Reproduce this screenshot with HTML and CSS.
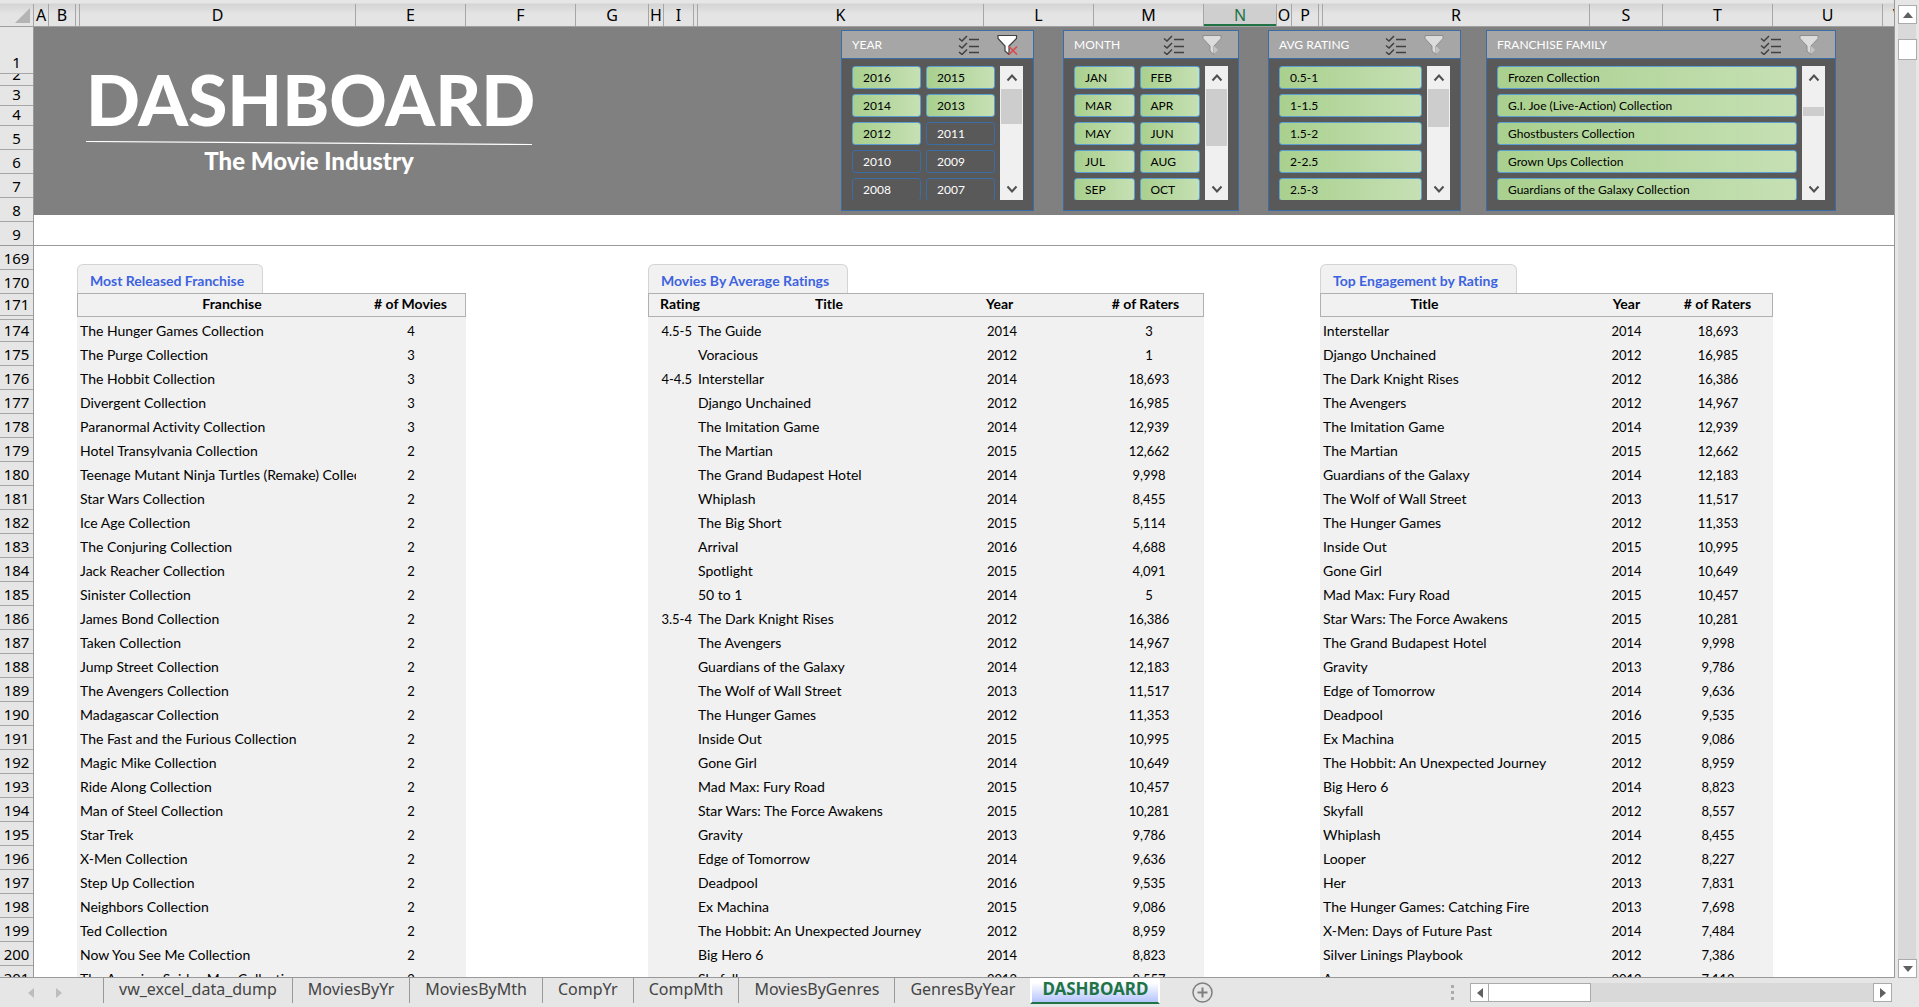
FILE: index.html
```html
<!DOCTYPE html>
<html lang="en">
<head>
<meta charset="utf-8">
<title>Movie Industry Dashboard</title>
<link rel="stylesheet" href="styles.css">
</head>
<body>
<svg class="defs" aria-hidden="true">
  <symbol id="multi" viewBox="0 0 22 20">
    <path d="M1 3.5l3 2.5 5-5M1 10.5l3 2.5 5-5M1 17l3 2.5 5-5" fill="none" stroke="#404040" stroke-width="1.5"/>
    <path d="M11 4.500h10M11 11.500h10M11 17.500h10" stroke="#404040" stroke-width="1.500"/>
  </symbol>
  <symbol id="funnel" viewBox="0 0 22 20">
    <path d="M1 .5h18v3l-7 7.500v8.500l-4-3.500v-5l-7-7.500z" fill="#dcdcdc" stroke="#8c8c8c"/>
    <path d="M12 11v8l4-4z" fill="#c4c4c4"/>
  </symbol>
  <symbol id="funnel-on" viewBox="0 0 22 20">
    <path d="M1 .5h18.500v3l-7.500 7.500v8.500l-4-3.500v-5l-7-7.500z" fill="#fff" stroke="#404040" stroke-width="1.200"/>
    <path d="M12 11.500l8 8M20 11.500l-8 8" stroke="#e04848" stroke-width="1.600"/>
  </symbol>
  <symbol id="up" viewBox="0 0 12 12"><path d="M1.500 8.500l4.500-5 4.500 5" fill="none" stroke="#505050" stroke-width="2"/></symbol>
  <symbol id="down" viewBox="0 0 12 12"><path d="M1.500 3.500l4.500 5 4.500-5" fill="none" stroke="#505050" stroke-width="2"/></symbol>
</svg>
<div class="app">
  <div class="workbook">
    <div class="sheet">
      <div class="columns">
        <span class="corner"></span><span>A</span><span>B</span><span></span><span>D</span><span>E</span><span>F</span><span>G</span><span>H</span><span>I</span><span></span><span>K</span><span>L</span><span>M</span><span class="current">N</span><span>O</span><span>P</span><span></span><span>R</span><span>S</span><span>T</span><span>U</span><span class="last">V</span>
      </div>
      <div class="grid">
        <div class="rows">
          <span class="r1">1</span><span class="r2">2</span><span class="r3">3</span><span class="r3">4</span><span>5</span><span>6</span><span>7</span><span>8</span><span class="frozen">9</span><span>169</span><span>170</span><span class="short">171</span><span class="hidden-row"></span><span class="short">174</span><span>175</span><span>176</span><span>177</span><span>178</span><span>179</span><span>180</span><span>181</span><span>182</span><span>183</span><span>184</span><span>185</span><span>186</span><span>187</span><span>188</span><span>189</span><span>190</span><span>191</span><span>192</span><span>193</span><span>194</span><span>195</span><span>196</span><span>197</span><span>198</span><span>199</span><span>200</span><span>201</span>
        </div>
        <main class="cells">
          <header class="banner">
            <div class="brand">
              <h1>DASHBOARD</h1>
              <svg class="rule" viewBox="0 0 445 4" preserveAspectRatio="none" aria-hidden="true"><path d="M0 .5L445 3.500" stroke="#fff" stroke-width="1.200"/></svg>
              <p>The Movie Industry</p>
            </div>
            <section class="slicer two">
              <div class="slicer-head"><h2>YEAR</h2><button aria-label="Multi-select"><svg><use href="#multi"/></svg></button><button aria-label="Clear filter"><svg><use href="#funnel-on"/></svg></button></div>
              <div class="slicer-body">
                <div class="items"><button>2016</button><button>2015</button><button>2014</button><button>2013</button><button>2012</button><button class="off">2011</button><button class="off">2010</button><button class="off">2009</button><button class="off">2008</button><button class="off">2007</button></div>
                <div class="scroll"><button aria-label="Up"><svg><use href="#up"/></svg></button><i class="thumb thumb-year"></i><button aria-label="Down"><svg><use href="#down"/></svg></button></div>
              </div>
            </section>
            <section class="slicer two">
              <div class="slicer-head"><h2>MONTH</h2><button aria-label="Multi-select"><svg><use href="#multi"/></svg></button><button aria-label="Clear filter"><svg><use href="#funnel"/></svg></button></div>
              <div class="slicer-body">
                <div class="items"><button>JAN</button><button>FEB</button><button>MAR</button><button>APR</button><button>MAY</button><button>JUN</button><button>JUL</button><button>AUG</button><button>SEP</button><button>OCT</button></div>
                <div class="scroll"><button aria-label="Up"><svg><use href="#up"/></svg></button><i class="thumb thumb-month"></i><button aria-label="Down"><svg><use href="#down"/></svg></button></div>
              </div>
            </section>
            <section class="slicer">
              <div class="slicer-head"><h2>AVG RATING</h2><button aria-label="Multi-select"><svg><use href="#multi"/></svg></button><button aria-label="Clear filter"><svg><use href="#funnel"/></svg></button></div>
              <div class="slicer-body">
                <div class="items"><button>0.5-1</button><button>1-1.5</button><button>1.5-2</button><button>2-2.5</button><button>2.5-3</button></div>
                <div class="scroll"><button aria-label="Up"><svg><use href="#up"/></svg></button><i class="thumb thumb-rating"></i><button aria-label="Down"><svg><use href="#down"/></svg></button></div>
              </div>
            </section>
            <section class="slicer">
              <div class="slicer-head"><h2>FRANCHISE FAMILY</h2><button aria-label="Multi-select"><svg><use href="#multi"/></svg></button><button aria-label="Clear filter"><svg><use href="#funnel"/></svg></button></div>
              <div class="slicer-body">
                <div class="items"><button>Frozen Collection</button><button>G.I. Joe (Live-Action) Collection</button><button>Ghostbusters Collection</button><button>Grown Ups Collection</button><button>Guardians of the Galaxy Collection</button></div>
                <div class="scroll"><button aria-label="Up"><svg><use href="#up"/></svg></button><i class="thumb thumb-family"></i><button aria-label="Down"><svg><use href="#down"/></svg></button></div>
              </div>
            </section>
          </header>
          <div class="freeze"></div>
          <div class="reports">
            <section class="report franchise">
              <h2>Most Released Franchise</h2>
              <table>
                <colgroup><col><col class="num"></colgroup>
                <thead><tr><th>Franchise</th><th># of Movies</th></tr></thead>
                <tbody>
                <tr><td class="name">The Hunger Games Collection</td><td>4</td></tr>
                <tr><td class="name">The Purge Collection</td><td>3</td></tr>
                <tr><td class="name">The Hobbit Collection</td><td>3</td></tr>
                <tr><td class="name">Divergent Collection</td><td>3</td></tr>
                <tr><td class="name">Paranormal Activity Collection</td><td>3</td></tr>
                <tr><td class="name">Hotel Transylvania Collection</td><td>2</td></tr>
                <tr><td class="name">Teenage Mutant Ninja Turtles (Remake) Collection</td><td>2</td></tr>
                <tr><td class="name">Star Wars Collection</td><td>2</td></tr>
                <tr><td class="name">Ice Age Collection</td><td>2</td></tr>
                <tr><td class="name">The Conjuring Collection</td><td>2</td></tr>
                <tr><td class="name">Jack Reacher Collection</td><td>2</td></tr>
                <tr><td class="name">Sinister Collection</td><td>2</td></tr>
                <tr><td class="name">James Bond Collection</td><td>2</td></tr>
                <tr><td class="name">Taken Collection</td><td>2</td></tr>
                <tr><td class="name">Jump Street Collection</td><td>2</td></tr>
                <tr><td class="name">The Avengers Collection</td><td>2</td></tr>
                <tr><td class="name">Madagascar Collection</td><td>2</td></tr>
                <tr><td class="name">The Fast and the Furious Collection</td><td>2</td></tr>
                <tr><td class="name">Magic Mike Collection</td><td>2</td></tr>
                <tr><td class="name">Ride Along Collection</td><td>2</td></tr>
                <tr><td class="name">Man of Steel Collection</td><td>2</td></tr>
                <tr><td class="name">Star Trek</td><td>2</td></tr>
                <tr><td class="name">X-Men Collection</td><td>2</td></tr>
                <tr><td class="name">Step Up Collection</td><td>2</td></tr>
                <tr><td class="name">Neighbors Collection</td><td>2</td></tr>
                <tr><td class="name">Ted Collection</td><td>2</td></tr>
                <tr><td class="name">Now You See Me Collection</td><td>2</td></tr>
                <tr><td class="name">The Amazing Spider-Man Collection</td><td>2</td></tr>
                </tbody>
              </table>
            </section>
            <section class="report ratings">
              <h2>Movies By Average Ratings</h2>
              <table>
                <colgroup><col class="band"><col><col class="num"><col class="num"></colgroup>
                <thead><tr><th>Rating</th><th>Title</th><th>Year</th><th># of Raters</th></tr></thead>
                <tbody>
                <tr><td>4.5-5</td><td class="name">The Guide</td><td>2014</td><td>3</td></tr>
                <tr><td></td><td class="name">Voracious</td><td>2012</td><td>1</td></tr>
                <tr><td>4-4.5</td><td class="name">Interstellar</td><td>2014</td><td>18,693</td></tr>
                <tr><td></td><td class="name">Django Unchained</td><td>2012</td><td>16,985</td></tr>
                <tr><td></td><td class="name">The Imitation Game</td><td>2014</td><td>12,939</td></tr>
                <tr><td></td><td class="name">The Martian</td><td>2015</td><td>12,662</td></tr>
                <tr><td></td><td class="name">The Grand Budapest Hotel</td><td>2014</td><td>9,998</td></tr>
                <tr><td></td><td class="name">Whiplash</td><td>2014</td><td>8,455</td></tr>
                <tr><td></td><td class="name">The Big Short</td><td>2015</td><td>5,114</td></tr>
                <tr><td></td><td class="name">Arrival</td><td>2016</td><td>4,688</td></tr>
                <tr><td></td><td class="name">Spotlight</td><td>2015</td><td>4,091</td></tr>
                <tr><td></td><td class="name">50 to 1</td><td>2014</td><td>5</td></tr>
                <tr><td>3.5-4</td><td class="name">The Dark Knight Rises</td><td>2012</td><td>16,386</td></tr>
                <tr><td></td><td class="name">The Avengers</td><td>2012</td><td>14,967</td></tr>
                <tr><td></td><td class="name">Guardians of the Galaxy</td><td>2014</td><td>12,183</td></tr>
                <tr><td></td><td class="name">The Wolf of Wall Street</td><td>2013</td><td>11,517</td></tr>
                <tr><td></td><td class="name">The Hunger Games</td><td>2012</td><td>11,353</td></tr>
                <tr><td></td><td class="name">Inside Out</td><td>2015</td><td>10,995</td></tr>
                <tr><td></td><td class="name">Gone Girl</td><td>2014</td><td>10,649</td></tr>
                <tr><td></td><td class="name">Mad Max: Fury Road</td><td>2015</td><td>10,457</td></tr>
                <tr><td></td><td class="name">Star Wars: The Force Awakens</td><td>2015</td><td>10,281</td></tr>
                <tr><td></td><td class="name">Gravity</td><td>2013</td><td>9,786</td></tr>
                <tr><td></td><td class="name">Edge of Tomorrow</td><td>2014</td><td>9,636</td></tr>
                <tr><td></td><td class="name">Deadpool</td><td>2016</td><td>9,535</td></tr>
                <tr><td></td><td class="name">Ex Machina</td><td>2015</td><td>9,086</td></tr>
                <tr><td></td><td class="name">The Hobbit: An Unexpected Journey</td><td>2012</td><td>8,959</td></tr>
                <tr><td></td><td class="name">Big Hero 6</td><td>2014</td><td>8,823</td></tr>
                <tr><td></td><td class="name">Skyfall</td><td>2012</td><td>8,557</td></tr>
                </tbody>
              </table>
            </section>
            <section class="report engagement">
              <h2>Top Engagement by Rating</h2>
              <table>
                <colgroup><col><col class="year"><col class="num"></colgroup>
                <thead><tr><th>Title</th><th>Year</th><th># of Raters</th></tr></thead>
                <tbody>
                <tr><td class="name">Interstellar</td><td>2014</td><td>18,693</td></tr>
                <tr><td class="name">Django Unchained</td><td>2012</td><td>16,985</td></tr>
                <tr><td class="name">The Dark Knight Rises</td><td>2012</td><td>16,386</td></tr>
                <tr><td class="name">The Avengers</td><td>2012</td><td>14,967</td></tr>
                <tr><td class="name">The Imitation Game</td><td>2014</td><td>12,939</td></tr>
                <tr><td class="name">The Martian</td><td>2015</td><td>12,662</td></tr>
                <tr><td class="name">Guardians of the Galaxy</td><td>2014</td><td>12,183</td></tr>
                <tr><td class="name">The Wolf of Wall Street</td><td>2013</td><td>11,517</td></tr>
                <tr><td class="name">The Hunger Games</td><td>2012</td><td>11,353</td></tr>
                <tr><td class="name">Inside Out</td><td>2015</td><td>10,995</td></tr>
                <tr><td class="name">Gone Girl</td><td>2014</td><td>10,649</td></tr>
                <tr><td class="name">Mad Max: Fury Road</td><td>2015</td><td>10,457</td></tr>
                <tr><td class="name">Star Wars: The Force Awakens</td><td>2015</td><td>10,281</td></tr>
                <tr><td class="name">The Grand Budapest Hotel</td><td>2014</td><td>9,998</td></tr>
                <tr><td class="name">Gravity</td><td>2013</td><td>9,786</td></tr>
                <tr><td class="name">Edge of Tomorrow</td><td>2014</td><td>9,636</td></tr>
                <tr><td class="name">Deadpool</td><td>2016</td><td>9,535</td></tr>
                <tr><td class="name">Ex Machina</td><td>2015</td><td>9,086</td></tr>
                <tr><td class="name">The Hobbit: An Unexpected Journey</td><td>2012</td><td>8,959</td></tr>
                <tr><td class="name">Big Hero 6</td><td>2014</td><td>8,823</td></tr>
                <tr><td class="name">Skyfall</td><td>2012</td><td>8,557</td></tr>
                <tr><td class="name">Whiplash</td><td>2014</td><td>8,455</td></tr>
                <tr><td class="name">Looper</td><td>2012</td><td>8,227</td></tr>
                <tr><td class="name">Her</td><td>2013</td><td>7,831</td></tr>
                <tr><td class="name">The Hunger Games: Catching Fire</td><td>2013</td><td>7,698</td></tr>
                <tr><td class="name">X-Men: Days of Future Past</td><td>2014</td><td>7,484</td></tr>
                <tr><td class="name">Silver Linings Playbook</td><td>2012</td><td>7,386</td></tr>
                <tr><td class="name">Argo</td><td>2012</td><td>7,112</td></tr>
                </tbody>
              </table>
            </section>
          </div>
        </main>
      </div>
    </div>
    <div class="vbar">
      <button aria-label="Scroll up"><svg viewBox="0 0 10 10"><path d="M0 8l5-6 5 6z"/></svg></button>
      <i class="thumb"></i>
      <button aria-label="Scroll down"><svg viewBox="0 0 10 10"><path d="M0 2l5 6 5-6z"/></svg></button>
    </div>
  </div>
  <footer class="tabs">
    <div class="nav">
      <button aria-label="Previous sheet"><svg viewBox="0 0 6 10"><path d="M6 0v10L0 5z"/></svg></button>
      <button aria-label="Next sheet"><svg viewBox="0 0 6 10"><path d="M0 0v10l6-5z"/></svg></button>
    </div>
    <button class="tab">vw_excel_data_dump</button>
    <button class="tab">MoviesByYr</button>
    <button class="tab">MoviesByMth</button>
    <button class="tab">CompYr</button>
    <button class="tab">CompMth</button>
    <button class="tab">MoviesByGenres</button>
    <button class="tab">GenresByYear</button>
    <button class="tab active">DASHBOARD</button>
    <button class="add" aria-label="New sheet"><svg viewBox="0 0 21 21"><circle cx="10.500" cy="10.500" r="9.500"/><path d="M5.500 10.500h10M10.500 5.500v10" stroke-width="2"/></svg></button>
    <span class="grip"><i></i><i></i><i></i></span>
    <div class="hbar">
      <button aria-label="Scroll left"><svg viewBox="0 0 10 10"><path d="M8 0v10L2 5z"/></svg></button>
      <i class="thumb"></i>
      <button aria-label="Scroll right"><svg viewBox="0 0 10 10"><path d="M2 0v10l6-5z"/></svg></button>
    </div>
  </footer>
</div>
</body>
</html>
```
FILE: styles.css
```css
* { box-sizing: border-box; }
body { margin: 0; background: #e6e6e6; color: #000; font: 13px/24px Lato, "Liberation Sans", sans-serif; font-variant-ligatures: none; }
button { margin: 0; padding: 0; border: 0; background: none; font: inherit; font-variant-ligatures: none; color: inherit; }
h1, h2, p { margin: 0; }
.defs { display: none; }

.app { display: flex; flex-direction: column; height: 100vh; overflow: hidden; }
.workbook { display: flex; flex: 1; min-height: 0; }
.sheet { display: flex; flex-direction: column; flex: 1; min-width: 0; overflow: hidden; border-right: 1px solid #999; border-bottom: 1px solid #999; }

/* column letters */
.columns {
  display: grid;
  grid-template-columns: 34px 15px 27px 4px 276px 110px 110px 73px 15px 30px 4px 286px 110px 110px 73px 15px 27px 4px 267px 73px 110px 110px 1fr;
  flex: none;
  height: 27px;
  padding-top: 4px;
  border-bottom: 1px solid #a0a0a0;
  background: linear-gradient(#e6e6e6 3px, #d4d4d4 4px, #e4e4e4 14px);
  font: 16px/22px "Noto Sans", "Open Sans", sans-serif;
  text-align: center;
}
.columns span { display: flex; justify-content: center; border-right: 1px solid #a6a6a6; overflow: hidden; }
.columns .corner { align-items: flex-end; justify-content: flex-end; padding: 0 3px 3px 0; }
.corner::after { content: ""; border-style: solid; border-width: 0 0 15px 15px; border-color: transparent transparent #b4b4b4; }
.columns .current { background: #cfcfcf; color: #217346; box-shadow: inset 0 -2px #217346; }
.columns .last { justify-content: flex-start; padding-left: 10px; border: 0; }

.grid { display: flex; flex: 1; min-height: 0; }

/* row numbers */
.rows { display: flex; flex-direction: column; flex: none; width: 34px; border-right: 1px solid #999; font: 15px/22px "Noto Sans", "Open Sans", sans-serif; text-align: center; }
.rows span { display: flex; flex: none; align-items: flex-end; justify-content: center; height: 24px; border-bottom: 1px solid #a6a6a6; overflow: hidden; }
.rows .r1 { height: 47px; }
.rows .r2 { height: 12px; }
.rows .r3 { height: 20px; }
.rows .short { height: 22px; }
.rows .hidden-row { height: 4px; }
.rows .frozen { border-color: #999; }

.cells { flex: 1; min-width: 0; background: #fff; overflow: hidden; }

/* banner */
.banner { display: flex; align-items: flex-start; gap: 25px; height: 188px; padding: 3px 58px 0 52px; background: #808080; color: #fff; }
.brand { width: 446px; margin-right: auto; padding-top: 26px; font-weight: 900; text-align: center; }
.brand h1 { font-size: 71px; line-height: 85px; font-weight: 900; text-align: left; white-space: nowrap; }
.rule { display: block; width: 100%; height: 4px; }
.brand p { font-size: 24px; line-height: 32px; }

.slicer { flex: none; border: 1px solid #3c6ca4; background: #595959; width: 193px; }
.slicer:last-child { width: 350px; }
.two { margin-right: 4px; }
.slicer-head { display: flex; align-items: center; gap: 17px; height: 28px; padding: 0 14px 0 10px; border-bottom: 1px solid #3c6ca4; background: #a6a6a6; }
.slicer-head h2 { margin-right: auto; font-size: 12px; font-weight: 400; }
.slicer-head svg { display: block; width: 22px; height: 20px; }
.slicer-body { display: flex; gap: 5px; height: 151px; padding: 7px 10px 10px; }
.items { display: grid; gap: 5px; flex: 1; grid-auto-rows: 23px; overflow: hidden; }
.two .items { grid-template-columns: 1fr 1fr; }
.two + .two { width: 176px; }
.items button { padding-left: 10px; border: 1px solid #5b9fd0; border-radius: 3px; background: linear-gradient(90deg, #a9d08e, #c6e0b4); color: #000; font-size: 12px; line-height: 20px; text-align: left; white-space: nowrap; }
.items .off { border-color: #3c6ca4; background: #595959; color: #fff; }
.scroll { display: flex; flex-direction: column; width: 23px; background: #f0f0f0; }
.scroll button { display: flex; align-items: center; justify-content: center; height: 23px; }
.scroll button:last-child { margin-top: auto; }
.scroll svg { width: 12px; height: 12px; }
.scroll .thumb { margin: 0 1px; background: #cdcdcd; }
.thumb-year { height: 35px; }
.thumb-month { height: 57px; }
.thumb-rating { height: 38px; }
.scroll .thumb-family { height: 9px; margin-top: 18px; }

.freeze { height: 31px; border-bottom: 1px solid #999; }

/* report tables */
.reports { display: flex; padding: 18px 0 0 43px; }
.report { flex: none; }
.report h2 { width: fit-content; height: 29px; padding: 4px 18px 0 12px; border: 1px solid #d4d4d4; border-bottom: 0; border-radius: 6px 6px 0 0; background: #f1f1f1; color: #3d63e0; font-size: 14px; font-weight: 700; }
.franchise { width: 389px; }
.ratings { width: 556px; margin-left: 182px; }
.engagement { width: 453px; margin-left: 116px; }
table { width: 100%; table-layout: fixed; border-spacing: 0; background: #f1f1f1; }
.num { width: 110px; }
.year { width: 73px; }
.band { width: 46px; }
th { height: 24px; padding: 0 0 2px; border: solid #b0b0b0; border-width: 1px 0; font-size: 14px; font-weight: 700; line-height: 20px; white-space: nowrap; }
th:first-child { border-left-width: 1px; }
th:last-child { border-right-width: 1px; }
td { height: 24px; padding: 4px 0 0 3px; line-height: 20px; white-space: nowrap; overflow: hidden; }
.name { font-size: 14px; }
td:last-child, .engagement td:nth-child(2) { padding-left: 0; text-align: center; }
.franchise th:first-child { padding-left: 30px; }
.ratings th:first-child { padding-left: 11px; text-align: left; }
.ratings th:nth-child(2) { padding-right: 20px; }
.ratings th:nth-child(3) { padding-left: 2px; text-align: left; }
.ratings th:last-child { padding-right: 6px; }
.ratings td:first-child { padding-right: 2px; text-align: right; }
.ratings td:nth-child(2) { padding-left: 4px; }
.engagement th:first-child { padding-right: 62px; }

/* window scroll bars */
.vbar { display: flex; flex-direction: column; flex: none; width: 24px; padding: 5px 3px 0; background: linear-gradient(#d9d9d9, #d9d9d9) content-box; }
.vbar button, .hbar button { display: flex; align-items: center; justify-content: center; flex: none; width: 19px; height: 19px; border: 1px solid #ababab; background: #fff; }
.vbar svg, .hbar svg { width: 10px; height: 10px; fill: #606060; }
.vbar .thumb { height: 21px; width: 19px; margin: 15px 0 auto; border: 1px solid #ababab; background: #fff; }
.hbar { display: flex; align-self: center; width: 422px; margin-right: 27px; background: #d9d9d9; }
.hbar .thumb { width: 102px; margin-right: auto; border: 1px solid #ababab; border-left: 0; background: #fff; }

/* sheet tabs */
.tabs { display: flex; align-items: flex-start; flex: none; height: 29px; color: #444; font: 16px/22px "Noto Sans", "Open Sans", sans-serif; }
.nav { display: flex; align-items: center; gap: 22px; width: 103px; height: 29px; padding-left: 28px; }
.nav svg { display: block; width: 6px; height: 10px; fill: #bdbdbd; }
.tab { height: 25px; padding: 0 15px 3px; border-left: 1px solid #999; white-space: nowrap; }
.active { height: 26px; padding: 0 10px 2px; border: 2px solid #fff; border-top: 0; border-bottom: 2px solid #217346; background: linear-gradient(#fff 20%, #b4c4ff); color: #217346; font-size: 17px; font-weight: 700; }
.add { margin: 4px 0 0 32px; }
.add svg { display: block; width: 21px; height: 21px; fill: none; stroke: #7f7f7f; stroke-width: 1.500px; }
.grip { display: flex; flex-direction: column; gap: 3px; align-self: center; margin: 0 16px 0 auto; }
.grip i { width: 3px; height: 3px; background: #ababab; }
```
